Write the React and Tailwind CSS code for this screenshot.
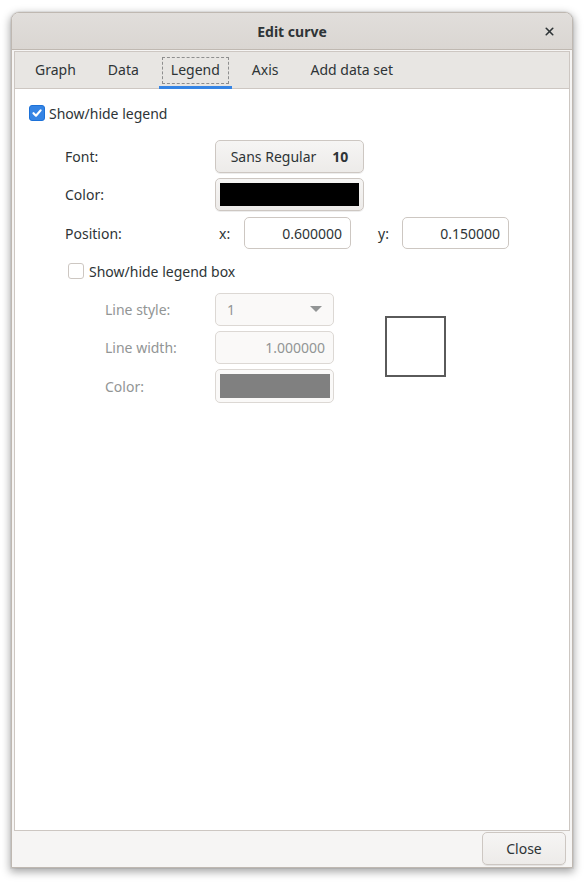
import { X } from "lucide-react";

const font = { fontFamily: '"Noto Sans", "DejaVu Sans", sans-serif' };

const Check = ({ checked }) =>
  checked ? (
    <span className="w-[16px] h-[16px] rounded-[3px] bg-[#3584e4] border border-[#1c71d8] flex items-center justify-center shrink-0">
      <svg width="12" height="12" viewBox="0 0 12 12">
        <path d="M2.5 6.2 L5 8.7 L9.6 3.4" fill="none" stroke="white" strokeWidth="2.2" strokeLinecap="round" strokeLinejoin="round" />
      </svg>
    </span>
  ) : (
    <span className="w-[16px] h-[16px] rounded-[3px] bg-white border border-[#cdc7c2] shrink-0" />
  );

const Button = ({ className = "", children }) => (
  <div className={"flex items-center justify-center rounded-[5px] border border-[#cdc7c2] bg-gradient-to-b from-[#f6f5f4] to-[#edebe9] shadow-[0_1px_0_rgba(0,0,0,0.07)] " + className}>
    {children}
  </div>
);

const Entry = ({ value, className = "" }) => (
  <div className={"flex items-center justify-end pr-[8px] rounded-[5px] border border-[#cdc7c2] bg-white text-[#2e3436] " + className}>
    {value}
  </div>
);

export default function App() {
  return (
    <div className="w-[588px] h-[888px] bg-white pt-[12px] pl-[11px] text-[14px] text-[#2e3436]" style={font}>
      <div className="w-[562px] h-[856px] flex flex-col rounded-t-[8px] border border-[#bfb8b1] bg-[#f6f5f4] shadow-[0_3px_9px_1px_rgba(0,0,0,0.35),0_0_0_1px_rgba(0,0,0,0.05)] overflow-hidden">
        {/* header bar */}
        <div className="h-[37px] shrink-0 relative flex items-center justify-center bg-gradient-to-b from-[#e1dedb] to-[#dad6d2] border-b border-[#bfb8b1]">
          <span className="font-bold text-[#2e3436]">Edit curve</span>
          <X className="absolute right-[16px] top-[12px]" size={13} strokeWidth={3} color="#2e3436" />
        </div>

        {/* notebook */}
        <div className="flex-1 flex flex-col pt-[1px] px-[2px]">
          <div className="flex-1 flex flex-col border border-[#cdc7c2]">
            <div className="h-[37px] shrink-0 flex items-stretch bg-[#e8e6e3] border-b border-[#cdc7c2] pl-[8px] gap-[8px]">
              {["Graph", "Data", "Legend", "Axis", "Add data set"].map((t) => (
                <div key={t} className="relative flex items-center px-[12px] pb-[2px]">
                  <span>{t}</span>
                  {t === "Legend" && (
                    <>
                      <span className="absolute left-[3px] right-[3px] top-[5px] bottom-[4px] border border-dashed border-[#8e8e8e]" />
                      <span className="absolute left-0 right-0 bottom-[-1px] h-[3px] bg-[#3584e4]" />
                    </>
                  )}
                </div>
              ))}
            </div>

            <div className="flex-1 bg-white pt-[15px] pl-[14px]">
              <div className="flex items-center gap-[4px] h-[18px]">
                <Check checked />
                <span>Show/hide legend</span>
              </div>

              <div className="pl-[36px] pt-[18px] flex flex-col gap-[5px]">
                <div className="flex items-center">
                  <span className="w-[150px]">Font:</span>
                  <Button className="w-[149px] h-[33px] gap-[16px]">
                    <span>Sans Regular</span>
                    <span className="font-bold">10</span>
                  </Button>
                </div>
                <div className="flex items-center">
                  <span className="w-[150px]">Color:</span>
                  <Button className="w-[149px] h-[33px]">
                    <div className="w-[139px] h-[23px] bg-black" />
                  </Button>
                </div>
                <div className="flex items-center mt-[1px]">
                  <span className="w-[154px]">Position:</span>
                  <span className="w-[25px]">x:</span>
                  <Entry value="0.600000" className="w-[107px] h-[32px]" />
                  <span className="w-[51px] pl-[27px]">y:</span>
                  <Entry value="0.150000" className="w-[107px] h-[32px]" />
                </div>
              </div>

              <div className="pl-[39px] pt-[13px]">
                <div className="flex items-center gap-[5px] h-[18px]">
                  <Check />
                  <span>Show/hide legend box</span>
                </div>
                <div className="flex items-center pl-[37px] pt-[13px]">
                  <div className="flex flex-col gap-[5px] text-[#929595]">
                    <div className="flex items-center">
                      <span className="w-[110px]">Line style:</span>
                      <div className="w-[119px] h-[33px] flex items-center justify-between px-[11px] rounded-[5px] border border-[#dcd8d4] bg-[#faf9f8]">
                        <span>1</span>
                        <svg width="12" height="7" viewBox="0 0 12 7">
                          <path d="M0 0 L12 0 L6 6 Z" fill="#929595" />
                        </svg>
                      </div>
                    </div>
                    <div className="flex items-center">
                      <span className="w-[110px]">Line width:</span>
                      <div className="w-[119px] h-[33px] flex items-center justify-end pr-[8px] rounded-[5px] border border-[#dcd8d4] bg-[#faf9f8]">
                        1.000000
                      </div>
                    </div>
                    <div className="flex items-center">
                      <span className="w-[110px]">Color:</span>
                      <div className="w-[119px] h-[34px] flex items-center justify-center rounded-[5px] border border-[#dcd8d4] bg-[#faf9f8]">
                        <div className="w-[110px] h-[24px] bg-[#808080]" />
                      </div>
                    </div>
                  </div>
                  <div className="ml-[51px] mb-[3px] w-[61px] h-[61px] border-2 border-[#5a5a5a]" />
                </div>
              </div>
            </div>
          </div>
        </div>

        {/* action area */}
        <div className="h-[36px] shrink-0 flex justify-end items-start pt-[1px] pr-[6px]">
          <Button className="w-[84px] h-[33px]">Close</Button>
        </div>
      </div>
    </div>
  );
}
